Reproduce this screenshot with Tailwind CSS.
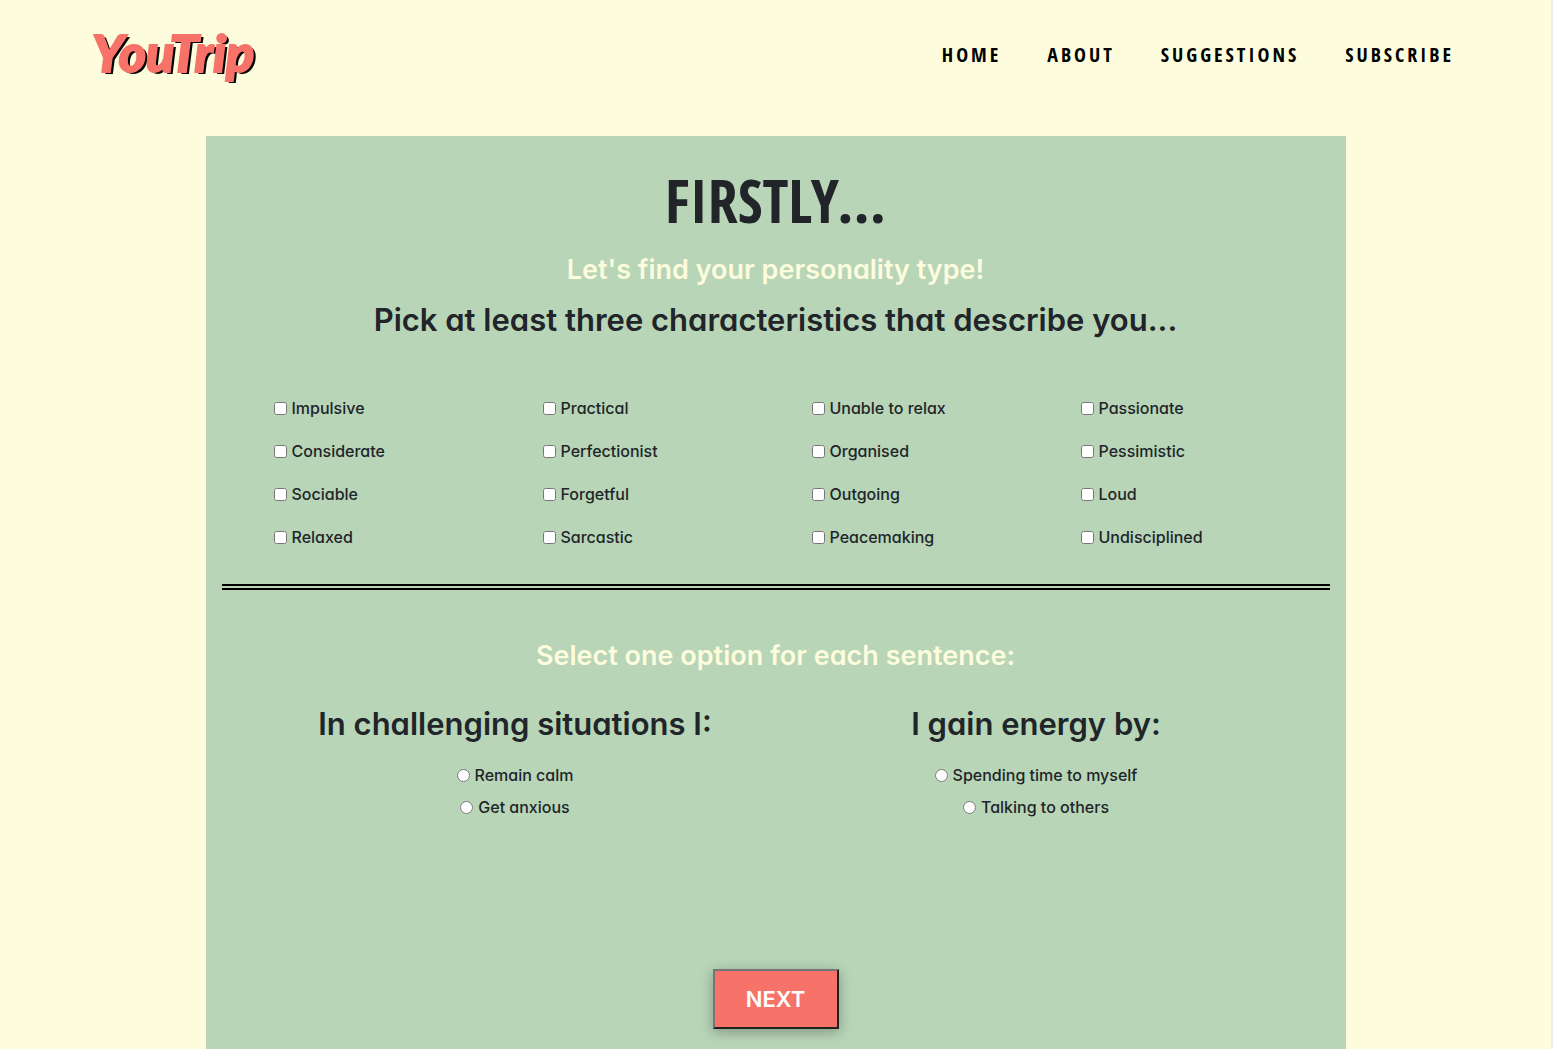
<!DOCTYPE html>
<html lang="en">
<head>
<meta charset="utf-8">
<meta name="viewport" content="width=device-width, initial-scale=1">
<title>YouTrip</title>
<script src="https://cdn.jsdelivr.net/npm/@tailwindcss/browser@4"></script>
</head>
<body class="min-h-screen flex flex-col bg-[#fdfcdc] border-r-2 border-[#ededed] text-[#212529] font-['Inter','Open_Sans',sans-serif] [font-feature-settings:'cv11'] text-base font-medium">
<header class="flex flex-wrap items-center justify-between h-28 pl-[92px] pr-[97px]">
  <a href="#" class="pb-2 font-['Lato',sans-serif] italic font-black text-[52px] leading-[60px] text-[#f77268] [-webkit-text-stroke:2px_#f77268] [text-shadow:3px_2px_0_#000]">YouTrip</a>
  <nav class="flex gap-[46px] pb-0.5 font-['Open_Sans_Condensed','Roboto_Condensed',sans-serif] font-bold text-[20px] leading-8 tracking-[3px] text-black">
    <a href="#">HOME</a>
    <a href="#">ABOUT</a>
    <a href="#">SUGGESTIONS</a>
    <a href="#">SUBSCRIBE</a>
  </nav>
</header>

<main class="grow flex flex-col w-full max-w-[1140px] mx-auto mt-6 px-4 pb-5 bg-[#b8d5b8]">
  <h1 class="mt-6 text-center font-['Open_Sans_Condensed','Roboto_Condensed',sans-serif] font-bold text-[60px] leading-20">FIRSTLY...</h1>
  <h2 class="mt-3 text-center text-[27px] leading-9 font-semibold text-[#fdfcdc]">Let's find your personality type!</h2>
  <h3 class="mt-3 text-center text-[31px] leading-10 font-semibold">Pick at least three characteristics that describe you...</h3>

  <form class="grow flex flex-col">
    <fieldset class="mt-14 pl-[52px] grid grid-flow-col grid-rows-4 auto-cols-[269px] gap-y-[19px]">
      <label class="flex items-center gap-[5px] leading-6"><input type="checkbox" class="size-[13px]">Impulsive</label>
      <label class="flex items-center gap-[5px] leading-6"><input type="checkbox" class="size-[13px]">Considerate</label>
      <label class="flex items-center gap-[5px] leading-6"><input type="checkbox" class="size-[13px]">Sociable</label>
      <label class="flex items-center gap-[5px] leading-6"><input type="checkbox" class="size-[13px]">Relaxed</label>
      <label class="flex items-center gap-[5px] leading-6"><input type="checkbox" class="size-[13px]">Practical</label>
      <label class="flex items-center gap-[5px] leading-6"><input type="checkbox" class="size-[13px]">Perfectionist</label>
      <label class="flex items-center gap-[5px] leading-6"><input type="checkbox" class="size-[13px]">Forgetful</label>
      <label class="flex items-center gap-[5px] leading-6"><input type="checkbox" class="size-[13px]">Sarcastic</label>
      <label class="flex items-center gap-[5px] leading-6"><input type="checkbox" class="size-[13px]">Unable to relax</label>
      <label class="flex items-center gap-[5px] leading-6"><input type="checkbox" class="size-[13px]">Organised</label>
      <label class="flex items-center gap-[5px] leading-6"><input type="checkbox" class="size-[13px]">Outgoing</label>
      <label class="flex items-center gap-[5px] leading-6"><input type="checkbox" class="size-[13px]">Peacemaking</label>
      <label class="flex items-center gap-[5px] leading-6"><input type="checkbox" class="size-[13px]">Passionate</label>
      <label class="flex items-center gap-[5px] leading-6"><input type="checkbox" class="size-[13px]">Pessimistic</label>
      <label class="flex items-center gap-[5px] leading-6"><input type="checkbox" class="size-[13px]">Loud</label>
      <label class="flex items-center gap-[5px] leading-6"><input type="checkbox" class="size-[13px]">Undisciplined</label>
    </fieldset>

    <hr class="mt-[35px] border-0 border-t-[6px] border-double border-black">

    <h2 class="mt-12 text-center text-[27px] leading-9 font-semibold text-[#fdfcdc]">Select one option for each sentence:</h2>

    <div class="mt-[30px] px-[33px] grid grid-cols-2">
      <fieldset class="flex flex-col items-center">
        <legend class="mx-auto text-[31px] leading-10 font-semibold">In challenging situations I:</legend>
        <label class="mt-[19px] flex items-center gap-[5px] leading-6"><input type="radio" name="situations" class="size-[13px]">Remain calm</label>
        <label class="mt-2 flex items-center gap-[5px] leading-6"><input type="radio" name="situations" class="size-[13px]">Get anxious</label>
      </fieldset>
      <fieldset class="flex flex-col items-center">
        <legend class="mx-auto text-[31px] leading-10 font-semibold">I gain energy by:</legend>
        <label class="mt-[19px] flex items-center gap-[5px] leading-6"><input type="radio" name="energy" class="size-[13px]">Spending time to myself</label>
        <label class="mt-2 flex items-center gap-[5px] leading-6"><input type="radio" name="energy" class="size-[13px]">Talking to others</label>
      </fieldset>
    </div>

    <button type="button" class="mt-auto mx-auto w-[126px] h-[60px] border-2 border-t-[#767676] border-l-[#767676] border-r-[#212121] border-b-[#212121] bg-[#f77268] text-white text-[22px] font-semibold shadow-[0_3px_12px_rgba(0,0,0,0.3)]">NEXT</button>
  </form>
</main>
</body>
</html>
